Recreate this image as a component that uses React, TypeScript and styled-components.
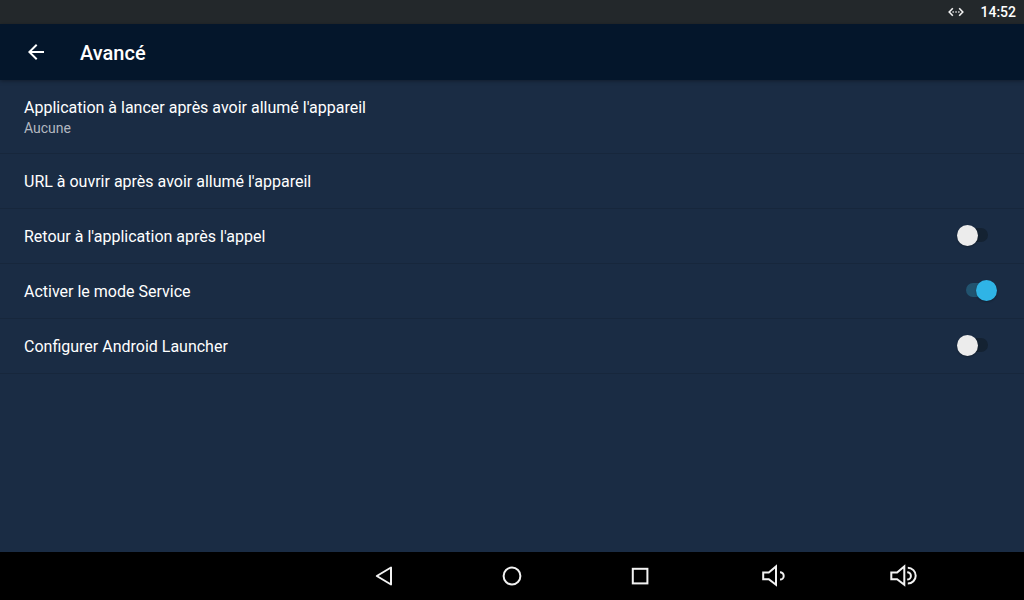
import React, { useState } from "react";
import styled, { createGlobalStyle } from "styled-components";

const GlobalStyle = createGlobalStyle`
  *, *::before, *::after { box-sizing: border-box; }
  body {
    margin: 0;
    background: #1a2c44;
    font-family: Roboto, "Liberation Sans", sans-serif;
    color: #fff;
  }
`;

const Screen = styled.div`
  display: flex;
  flex-direction: column;
  min-height: 100vh;
`;

const StatusBar = styled.div`
  display: flex;
  align-items: center;
  justify-content: flex-end;
  gap: 16px;
  height: 24px;
  padding-right: 8px;
  background: #23282b;
`;

const Clock = styled.time`
  font-size: 14px;
  line-height: 24px;
  font-weight: 500;
`;

const AppBar = styled.header`
  display: flex;
  align-items: center;
  gap: 32px;
  height: 56px;
  padding: 0 24px;
  background: #04162b;
  box-shadow: 0 1px 4px rgba(0, 0, 0, 0.35);
`;

const IconButton = styled.button`
  display: flex;
  align-items: center;
  justify-content: center;
  padding: 0;
  border: 0;
  background: none;
  color: inherit;
  cursor: pointer;
`;

const Title = styled.h1`
  margin: 0;
  padding-top: 2px;
  font-size: 20px;
  line-height: 24px;
  font-weight: 500;
`;

const Settings = styled.ul`
  flex: 1;
  margin: 0;
  padding: 0;
  list-style: none;
`;

const Item = styled.li`
  border-bottom: 1px solid #17273c;
`;

const ActionRow = styled.button`
  display: flex;
  flex-direction: column;
  justify-content: flex-start;
  width: 100%;
  min-height: 54px;
  padding: 18px 24px 15px;
  border: 0;
  background: none;
  color: inherit;
  font: inherit;
  text-align: left;
  cursor: pointer;
`;

const SwitchRow = styled.label`
  display: flex;
  align-items: flex-start;
  justify-content: space-between;
  min-height: 54px;
  padding: 18px 24px 15px;
  cursor: pointer;
`;

const Label = styled.span`
  font-size: 16px;
  line-height: 20px;
`;

const Summary = styled.span`
  font-size: 14px;
  line-height: 20px;
  color: #b2b8c0;
`;

const Switch = styled.input`
  appearance: none;
  position: relative;
  width: 22px;
  height: 14px;
  margin: 1px 12px 0 0;
  border-radius: 7px;
  background: #142232;
  cursor: pointer;

  &::before {
    content: "";
    position: absolute;
    top: -3px;
    left: -9px;
    width: 21px;
    height: 21px;
    border-radius: 50%;
    background: #ececec;
    box-shadow: 0 1px 2px rgba(0, 0, 0, 0.3);
  }

  &:checked {
    background: #21536f;
  }

  &:checked::before {
    left: 10px;
    background: #2fb4e6;
  }
`;

const NavBar = styled.nav`
  display: grid;
  grid-template-columns: 5fr repeat(5, 2fr) 1fr;
  height: 48px;
  background: #000;

  & > :first-child {
    grid-column-start: 2;
  }
`;

const Glyph = styled.svg`
  display: block;
  fill: none;
  stroke: #f2f2f2;
  stroke-width: 2;
`;

const navItems = [
  { label: "Retour", shape: <path d="M31 15.5v17L16.8 24z" strokeLinejoin="round" /> },
  { label: "Accueil", shape: <circle cx="24" cy="24" r="8.4" /> },
  { label: "Applications récentes", shape: <rect x="16.8" y="16.8" width="14.6" height="14.6" /> },
  {
    label: "Baisser le volume",
    shape: (
      <>
        <path d="M19.2 20.4h5.6l7.2-6v18.4l-7.2-5.6h-5.6z" />
        <path d="M36 20.2a3.7 3.7 0 0 1 0 7.4" />
      </>
    ),
  },
  {
    label: "Augmenter le volume",
    shape: (
      <>
        <path d="M19.3 20.4h5.8l7.2-6v18.4l-7.2-5.6h-5.8z" />
        <path d="M35.2 20.2a3.7 3.7 0 0 1 0 7.4M35.8 15.8a7.9 7.9 0 0 1 0 15.8" />
      </>
    ),
  },
];

function SwitchSetting({ label, initial = false }: { label: string; initial?: boolean }) {
  const [on, setOn] = useState(initial);
  return (
    <Item>
      <SwitchRow>
        <Label>{label}</Label>
        <Switch type="checkbox" role="switch" checked={on} onChange={() => setOn(!on)} />
      </SwitchRow>
    </Item>
  );
}

export default function App() {
  return (
    <Screen>
      <GlobalStyle />
      <StatusBar>
        <Glyph width="16" height="16" viewBox="0 0 16 16" aria-hidden="true">
          <path d="M4.8 4.2L1.2 8l3.6 3.8M11.2 4.2L14.8 8l-3.6 3.8" strokeWidth="1.6" />
          <path d="M4.5 8h1.3M7.4 8h1.3M10.2 8h1.3" strokeWidth="1.3" />
        </Glyph>
        <Clock>14:52</Clock>
      </StatusBar>
      <AppBar>
        <IconButton aria-label="Revenir en arrière">
          <svg width="24" height="24" viewBox="0 0 24 24" fill="currentColor" aria-hidden="true">
            <path d="M20 11H7.8l5.6-5.6L12 4l-8 8 8 8 1.4-1.4L7.8 13H20z" />
          </svg>
        </IconButton>
        <Title>Avancé</Title>
      </AppBar>
      <Settings>
        <Item>
          <ActionRow>
            <Label>Application à lancer après avoir allumé l'appareil</Label>
            <Summary>Aucune</Summary>
          </ActionRow>
        </Item>
        <Item>
          <ActionRow>
            <Label>URL à ouvrir après avoir allumé l'appareil</Label>
          </ActionRow>
        </Item>
        <SwitchSetting label="Retour à l'application après l'appel" />
        <SwitchSetting label="Activer le mode Service" initial />
        <SwitchSetting label="Configurer Android Launcher" />
      </Settings>
      <NavBar>
        {navItems.map(({ label, shape }) => (
          <IconButton key={label} aria-label={label}>
            <Glyph width="48" height="48" viewBox="0 0 48 48" aria-hidden="true">
              {shape}
            </Glyph>
          </IconButton>
        ))}
      </NavBar>
    </Screen>
  );
}
